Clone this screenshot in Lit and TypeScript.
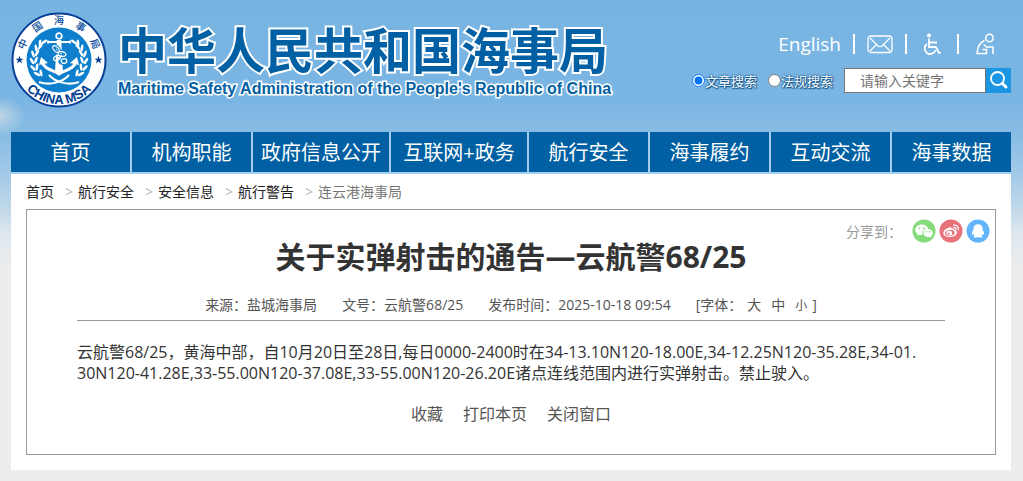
import { LitElement, html, css, svg } from "lit";
import { customElement, state } from "lit/decorators.js";

const NAV = ["首页", "机构职能", "政府信息公开", "互联网+政务", "航行安全", "海事履约", "互动交流", "海事数据"];
const CRUMBS = ["首页", "航行安全", "安全信息", "航行警告"];

@customElement("msa-emblem")
class MsaEmblem extends LitElement {
  static styles = css`
    :host { display: block; }
    svg { display: block; width: 96px; height: 96px; }
    .cn { font: 500 10px "Noto Sans CJK SC", sans-serif; fill: #0a4d9c; }
    .en { font: 700 13px "Liberation Sans", Arial, sans-serif; fill: #003c8f; }
  `;

  private leaves(side: number) {
    const spots = [[-15, -18, 32], [-19, -13, 18], [-22, -7, 6], [-23, 0, -4], [-22, 7, -18], [-18, 13, -35]];
    return svg`<g transform="scale(${side} 1)" fill="#fff">
      ${spots.map(([x, y, a]) => svg`
        <ellipse cx=${x} cy=${y} rx="1.3" ry="3.6" transform="rotate(${a + 24} ${x} ${y})"/>
        <ellipse cx=${x - 4} cy=${y + 1} rx="1.3" ry="3.6" transform="rotate(${a - 26} ${x - 4} ${y + 1})"/>`)}
    </g>`;
  }

  render() {
    const star = "M0-4.2 1-1.3H4L1.6.5 2.5 3.4 0 1.6-2.5 3.4-1.6.5-4-1.3H-1Z";
    return html`<svg viewBox="-48 -48 96 96" role="img" aria-label="中国海事局 CHINA MSA">
      <defs>
        <path id="bottom" d="M-44 0A44 44 0 0 0 44 0"/>
      </defs>
      <circle r="46.5" fill="#fff" stroke="#0a3f97" stroke-width="2"/>
      <circle r="32.5" fill="#0d7fcd"/>
      ${["中", "国", "海", "事", "局"].map((c, i) => svg`<text class="cn" text-anchor="middle" y="-36" transform="rotate(${-66 + i * 33})">${c}</text>`)}
      <path d=${star} transform="translate(-39.5 0)" fill="#003c8f"/>
      <path d=${star} transform="translate(39.5 0)" fill="#003c8f"/>
      <text class="en" text-anchor="middle"><textPath href="#bottom" startOffset="50%">CHINA MSA</textPath></text>
      ${this.leaves(1)}${this.leaves(-1)}
      <g fill="none" stroke="#fff">
        <circle cy="-24" r="2.8" stroke-width="1.8"/>
        <path d="M-11-19.5v3M11-19.5v3M-11-18H11" stroke-width="1.8"/>
        <path d="M-2.2-20 -4 12H4L2.2-20Z" fill="#fff" stroke="none"/>
        <path d="M-17 2C-14 10-6 10 0 14 6 10 14 10 17 2" stroke-width="3"/>
        <path d="M-20 5-18-3-11 3ZM20 5 18-3 11 3Z" fill="#fff" stroke="none"/>
        <path d="M-20 22C-9 26 4 22 10 15M20 22C9 26-4 22-10 15" stroke-width="2"/>
        <g stroke="#0d7fcd" stroke-width="3.4">
          <ellipse cx="-3" cy="-11" rx="4" ry="2.3" transform="rotate(45 -3 -11)"/>
          <ellipse cx="3" cy="-6" rx="4" ry="2.3" transform="rotate(10 3 -6)"/>
          <ellipse cx="4" cy="1" rx="3" ry="2.4"/>
        </g>
        <g stroke-width="1.3">
          <ellipse cx="-3" cy="-11" rx="4" ry="2.3" transform="rotate(45 -3 -11)"/>
          <ellipse cx="3" cy="-6" rx="4" ry="2.3" transform="rotate(10 3 -6)"/>
          <ellipse cx="-2" cy="-2" rx="3.6" ry="2.2" transform="rotate(-25 -2 -2)"/>
          <ellipse cx="5" cy="1" rx="2.8" ry="2.4"/>
        </g>
      </g>
    </svg>`;
  }
}

@customElement("share-icon")
class ShareIcon extends LitElement {
  static properties = { kind: {} };
  declare kind: string;
  static styles = css`
    :host { display: block; }
    svg { display: block; width: 24px; height: 24px; }
  `;
  render() {
    const art: Record<string, unknown> = {
      wechat: svg`<circle cx="12" cy="12" r="11.5" fill="#84db7a"/>
        <path d="M9.8 5.6C6 5.6 3.2 7.9 3.2 10.8c0 1.7.9 3.1 2.4 4.1l-.6 2 2.3-1.2c.8.2 1.6.3 2.5.3h.6c-.9-3.4 1.8-6.3 5.8-6.2-.6-2.5-3.3-4.2-6.4-4.2Z" fill="#fff"/>
        <path d="M20.9 14c0-2.3-2.2-4-4.8-4s-4.8 1.8-4.8 4 2.2 4 4.8 4c.6 0 1.2-.1 1.8-.3l1.7 1-.5-1.6c1.1-.8 1.8-1.9 1.8-3.1Z" fill="#fff"/>
        <g fill="#84db7a"><circle cx="7.6" cy="9.3" r=".9"/><circle cx="11.9" cy="9.3" r=".9"/><circle cx="14.6" cy="12.8" r=".7"/><circle cx="17.7" cy="12.8" r=".7"/></g>`,
      weibo: svg`<circle cx="12" cy="12" r="11.5" fill="#e8727a"/>
        <path d="M10 8.6c1.7-.7 2.9-.3 2.6 1.2 1.9-.7 3.5-.3 3 1.3 1.3.4 2.3 1.1 2.3 2.4 0 2.4-3.3 4.6-7.1 4.6-3.6 0-6.5-1.6-6.5-4.2 0-2 2.7-4.5 5.7-5.3Z" fill="#fff"/>
        <ellipse cx="10.8" cy="14" rx="4.8" ry="3.1" fill="#e8727a" transform="rotate(-8 10.8 14)"/>
        <ellipse cx="10.3" cy="14.2" rx="2.8" ry="2.4" fill="#fff"/><circle cx="9.7" cy="14.7" r="1" fill="#e8727a"/>
        <path d="M14.5 6.2c3-.6 5.5 1.7 4.7 4.6M15 8.4c1.4-.2 2.3.7 2 2" fill="none" stroke="#fff" stroke-width="1.2" stroke-linecap="round"/>`,
      qq: svg`<circle cx="12" cy="12" r="11.5" fill="#62b5fb"/>
        <path d="M12 5.2c-3 0-4.5 2-4.5 4.5l-.2 1.4c-1 1.5-1.7 3-1.3 4.4.4.6 1-.2 1.4-.8.2.9.6 1.5 1.2 2-.9.4-1.2 1.1-.6 1.6.8.5 2.7.4 4-.3 1.3.7 3.2.8 4 .3.6-.5.3-1.2-.6-1.6.6-.5 1-1.1 1.2-2 .4.6 1 1.4 1.4.8.4-1.4-.3-2.9-1.3-4.4l-.2-1.4c0-2.5-1.5-4.5-4.5-4.5Z" fill="#fff"/>`,
    };
    return html`<svg viewBox="0 0 24 24" aria-hidden="true">${art[this.kind]}</svg>`;
  }
}

@customElement("app-root")
class AppRoot extends LitElement {
  @state() scope = "article";

  static styles = css`
    :host {
      display: block;
      box-sizing: border-box;
      min-height: 100vh;
      padding: 0 12px 11px 11px;
      font-family: "Open Sans", "Noto Sans CJK SC", sans-serif;
      font-size: 14px;
      color: #333;
      background:
        radial-gradient(26px 20px at 0 116px, #d9e1e6b0 0, #d9e1e600 100%) no-repeat,
        linear-gradient(#78b4e1 0, #7ab5e3 100px, #86bbe3 130px, #a2c9e8 174px, #bcd6e9 205px, #dfe8ee 235px, #ededed 270px) #ededed;
    }
    * { box-sizing: border-box; }
    a { color: inherit; text-decoration: none; }
    .header { display: flex; align-items: flex-start; height: 132px; padding-top: 12px; }
    .brand { display: flex; flex-direction: column; padding: 13px 0 0 11px; margin: 0; color: #0060a3; font-weight: 400; }
    .name { font: 700 49px/55px "Liberation Sans", "Noto Sans CJK SC", sans-serif; white-space: nowrap; paint-order: stroke fill; -webkit-text-stroke: 4px #fff; }
    .name-en { font: 700 16px/18px "Liberation Sans", Arial, sans-serif; white-space: nowrap; paint-order: stroke fill; -webkit-text-stroke: 3px #fff; }
    .tools { display: flex; flex-direction: column; align-items: flex-end; gap: 12px; margin-left: auto; padding-top: 20px; }
    .links { display: flex; align-items: center; height: 24px; padding-right: 14px; color: #fff; font-size: 19px; line-height: 24px; }
    .links a { display: block; }
    .bar { width: 2px; height: 20px; margin: 0 12px; background: #fff; }
    .links svg { display: block; width: 26px; height: 24px; }
    .search { display: flex; align-items: center; }
    .scope { display: flex; align-items: center; margin-right: 11px; color: #fff; font-size: 13px; line-height: 18px; text-shadow: 0 0 2px #0b4f86, 0 0 2px #0b4f86, 1px 1px 1px #0b4f86; }
    .scope input { width: 13px; height: 13px; margin: 0; }
    .field { width: 142px; height: 25px; padding: 0 0 0 15px; border: 1px solid #767676; border-radius: 0; background: #fff; font: 14px "Open Sans", "Noto Sans CJK SC", sans-serif; color: #333; outline: 0; }
    .field::placeholder { color: #757575; opacity: 1; }
    .go { width: 25px; height: 25px; padding: 0; border: 0; background: #1b96e3; }
    .go svg { display: block; width: 25px; height: 25px; }
    .nav { display: grid; grid-template-columns: 119fr 119fr 136fr 136fr 119fr 119fr 119fr 119fr; gap: 2px; border-bottom: 2px solid #a5cdef; background: #a5cdef; }
    .nav a { height: 40px; padding-top: 2px; background: #0060a3; color: #fff; font-size: 20px; line-height: 38px; text-align: center; white-space: nowrap; }
    .page { padding: 6px 15px 15px; background: #fff; }
    .crumbs { display: flex; height: 29px; line-height: 24px; color: #777; }
    .crumbs a { color: #222; }
    .sep { padding: 0 5px 0 11px; color: #b5b5b5; }
    .article { padding: 9px 5px 0 50px; border: 1px solid #999; }
    .share { display: flex; justify-content: flex-end; align-items: center; gap: 3px; height: 24px; color: #999; }
    .share span { margin-right: 7px; }
    .main { padding: 0 45px 0 0; }
    .title { margin: -6px 0 0; font-size: 30px; line-height: 40px; font-weight: 700; text-align: center; }
    .meta { display: flex; justify-content: center; gap: 25px; margin-top: 16px; padding-bottom: 2px; border-bottom: 1px solid #999; line-height: 24px; color: #555; white-space: nowrap; }
    .sizes { display: flex; align-items: baseline; }
    .sizes button { padding: 0 5px; border: 0; background: none; color: inherit; font: inherit; line-height: 24px; }
    .sizes .small { font-size: 12px; }
    .text { margin: 21px 0 0; font-size: 16px; line-height: 21px; }
    .actions { display: flex; justify-content: center; gap: 20px; padding: 18px 0 28px; font-size: 16px; line-height: 24px; color: #555; }
  `;

  render() {
    return html`
      <header class="header">
        <msa-emblem></msa-emblem>
        <h1 class="brand">
          <span class="name">中华人民共和国海事局</span>
          <span class="name-en">Maritime Safety Administration of the People's Republic of China</span>
        </h1>
        <div class="tools">
          <div class="links">
            <a href="#">English</a><span class="bar"></span>
            <a href="#" aria-label="邮箱"><svg viewBox="0 0 26 24" fill="none" stroke="#fff" stroke-width="1.3"><rect x="1" y="4" width="24" height="16.5" rx="3"/><path d="M3 6l7.5 7.5q2.5 2.2 5 0L23 6M3 19l6.5-6.5M23 19l-6.5-6.5"/></svg></a><span class="bar"></span>
            <a href="#" aria-label="无障碍"><svg viewBox="0 0 26 24" fill="none" stroke="#fff" stroke-width="1.8"><circle cx="10" cy="3.5" r="2" fill="#fff" stroke="none"/><path d="M10 6.5v8.5h7l3 6 2-.5M10 10.5h8M8 12a5.5 5.5 0 1 0 8.5 6"/></svg></a><span class="bar"></span>
            <a href="#" aria-label="适老版"><svg viewBox="0 0 26 24" fill="none" stroke="#fff" stroke-width="1.5"><circle cx="18.5" cy="6" r="3.7"/><path d="M13.5 8.5C8.5 10.5 6.500 15 6 21.5h9.5v-4H11.5M12.5 12.5l3 2.5 6.5 0V22"/></svg></a>
          </div>
          <form class="search" @submit=${(e: Event) => e.preventDefault()}>
            <label class="scope"><input type="radio" name="scope" .checked=${this.scope === "article"} @change=${() => (this.scope = "article")}>文章搜索</label>
            <label class="scope"><input type="radio" name="scope" .checked=${this.scope === "law"} @change=${() => (this.scope = "law")}>法规搜索</label>
            <input class="field" type="text" aria-label="关键字" placeholder="请输入关键字">
            <button class="go" aria-label="搜索"><svg viewBox="0 0 25 25" fill="none" stroke="#fff"><circle cx="11.5" cy="10.5" r="6.5" stroke-width="1.8"/><path d="M16.5 15.5l3.5 3.5" stroke-width="3" stroke-linecap="round"/></svg></button>
          </form>
        </div>
      </header>
      <nav class="nav">${NAV.map((n) => html`<a href="#">${n}</a>`)}</nav>
      <main class="page">
        <div class="crumbs">${CRUMBS.map((c) => html`<a href="#">${c}</a><span class="sep">&gt;</span>`)}<span>连云港海事局</span></div>
        <article class="article">
          <div class="share"><span>分享到：</span>
            <a href="#" aria-label="微信"><share-icon kind="wechat"></share-icon></a>
            <a href="#" aria-label="微博"><share-icon kind="weibo"></share-icon></a>
            <a href="#" aria-label="QQ"><share-icon kind="qq"></share-icon></a>
          </div>
          <div class="main">
            <h2 class="title">关于实弹射击的通告—云航警68/25</h2>
            <div class="meta">
              <span>来源：盐城海事局</span><span>文号：云航警68/25</span><span>发布时间：2025-10-18 09:54</span>
              <span class="sizes">[字体：<button>大</button><button>中</button><button class="small">小</button>]</span>
            </div>
            <p class="text">云航警68/25，黄海中部，自10月20日至28日,每日0000-2400时在34-13.10N120-18.00E,34-12.25N120-35.28E,34-01.<br>30N120-41.28E,33-55.00N120-37.08E,33-55.00N120-26.20E诸点连线范围内进行实弹射击。禁止驶入。</p>
            <div class="actions"><a href="#">收藏</a><a href="#">打印本页</a><a href="#">关闭窗口</a></div>
          </div>
        </article>
      </main>`;
  }
}
